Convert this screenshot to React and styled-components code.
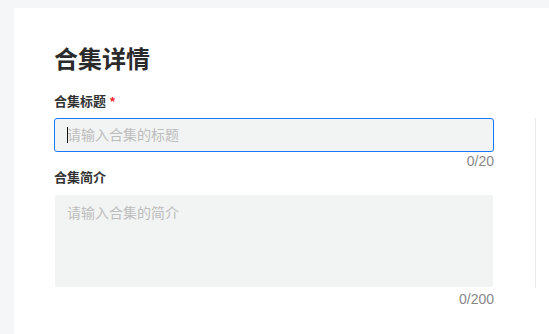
import React from 'react';
import styled, { createGlobalStyle } from 'styled-components';

const GlobalStyle = createGlobalStyle`
  html, body {
    margin: 0;
    padding: 0;
    background: #f5f6f7;
    font-family: "Liberation Sans", "Noto Sans CJK SC", sans-serif;
  }
  * { box-sizing: border-box; }
`;

const Page = styled.div`
  padding: 8px 0 0 14px;
  min-height: 334px;
`;

const Card = styled.div`
  background: #fff;
  min-height: 326px;
  padding: 34px 0 0 40px;
`;

const Title = styled.h2`
  margin: 0 0 14px;
  font-size: 24px;
  line-height: 36px;
  font-weight: 700;
  color: #2b2b2b;
`;

const Body = styled.div`
  display: flex;
  align-items: flex-start;
  gap: 41px;
`;

const Form = styled.div`
  flex: none;
  width: 440px;
  display: flex;
  flex-direction: column;
`;

const Side = styled.div`
  flex: none;
  margin-top: 26px;
  height: 170px;
  width: 1px;
  border-left: 1px solid #e8e8e8;
`;

const Label = styled.label`
  display: block;
  font-size: 13px;
  line-height: 20px;
  font-weight: 700;
  color: #333;
  margin-bottom: 6px;
`;

const Required = styled.span`
  color: #f5222d;
  margin-left: 4px;
`;

const Field = styled.div`
  position: relative;
`;

const Input = styled.input`
  display: block;
  width: 100%;
  height: 34px;
  padding: 0 12px;
  border: 1px solid #1677ff;
  border-radius: 3px;
  background: #f2f3f3;
  font-family: inherit;
  font-size: 14px;
  color: #333;
  outline: none;
  caret-color: transparent;

  &::placeholder {
    color: #bdbdbd;
  }
`;

const Caret = styled.span`
  position: absolute;
  left: 13px;
  top: 9px;
  width: 1px;
  height: 16px;
  background: #111;
`;

const TextArea = styled.textarea`
  display: block;
  width: 100%;
  height: 94px;
  padding: 8px 12px;
  border: 1px solid transparent;
  background-clip: padding-box;
  border-radius: 3px;
  background-color: #f2f3f3;
  font-family: inherit;
  font-size: 14px;
  line-height: 20px;
  color: #333;
  resize: none;
  outline: none;

  &::placeholder {
    color: #bdbdbd;
  }
`;

const Counter = styled.div`
  text-align: right;
  font-size: 14px;
  line-height: 18px;
  color: #888;
  margin-top: ${props => props.top || 0}px;
  margin-bottom: ${props => props.bottom || 0}px;
`;

export default function App() {
  return (
    <>
      <GlobalStyle />
      <Page>
        <Card>
          <Title>合集详情</Title>
          <Body>
            <Form>
              <Label>
                合集标题<Required>*</Required>
              </Label>
              <Field>
                <Input placeholder="请输入合集的标题" />
                <Caret />
              </Field>
              <Counter bottom={-2}>0/20</Counter>
              <Label>合集简介</Label>
              <TextArea placeholder="请输入合集的简介" />
              <Counter top={2}>0/200</Counter>
            </Form>
            <Side />
          </Body>
        </Card>
      </Page>
    </>
  );
}
